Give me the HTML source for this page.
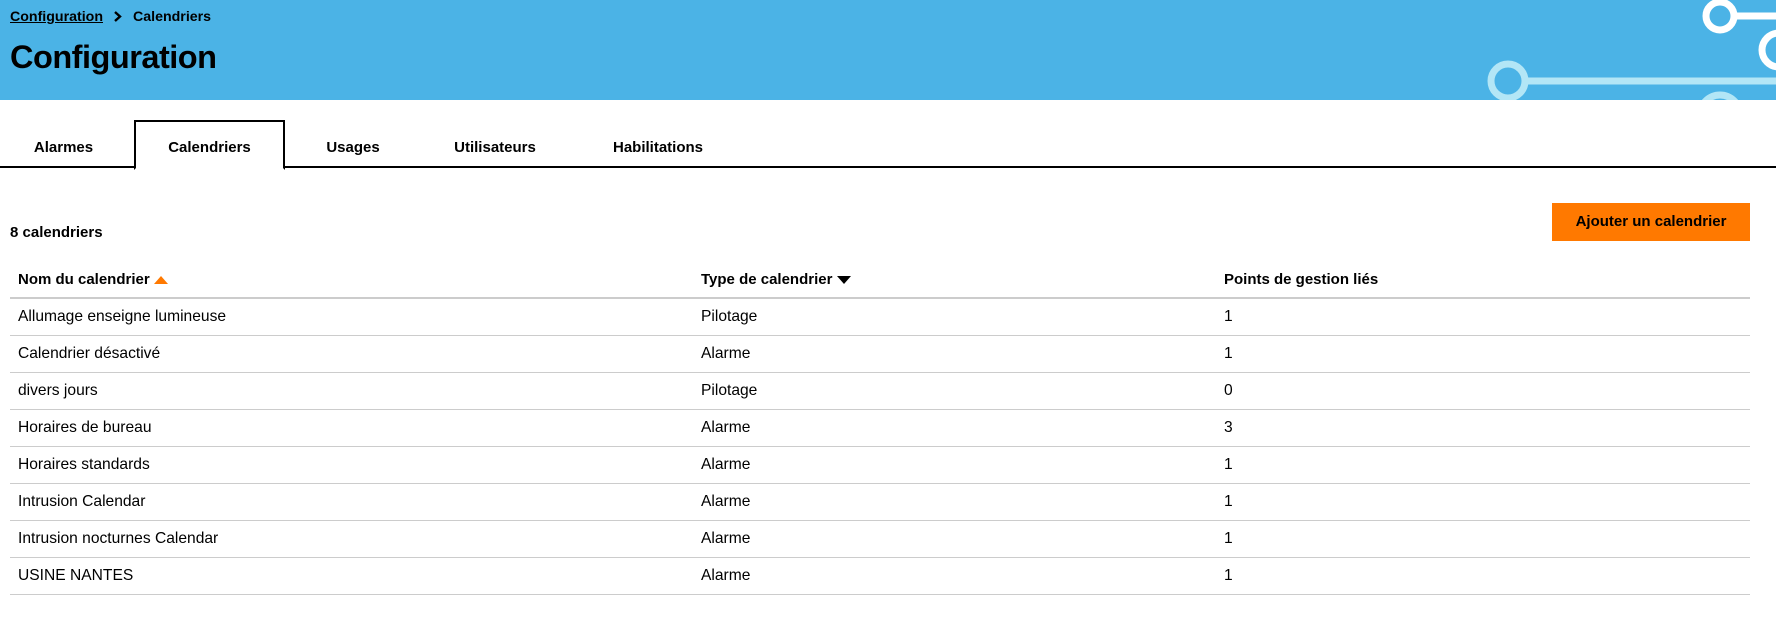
<!DOCTYPE html>
<html><head><meta charset="utf-8"><style>
*{margin:0;padding:0;box-sizing:border-box}
body{width:1776px;height:623px;background:#fff;font-family:"Liberation Sans",Arial,sans-serif;color:#000;position:relative;overflow:hidden}
.hdr{position:absolute;left:0;top:0;width:1776px;height:100px;background:#4bb3e6;overflow:hidden}
.bc{position:absolute;left:10px;top:9px;font-size:14.2px;font-weight:bold}
.bc u{text-decoration:underline}
.title{position:absolute;left:10px;top:39px;font-size:32.5px;font-weight:bold;letter-spacing:-0.5px}
.tabs{position:absolute;left:0;top:120px;width:1776px;height:48px;border-bottom:2px solid #000}
.tab{position:absolute;top:0;height:48px;line-height:55px;font-size:15px;font-weight:bold;text-align:center}
.tab.act{border:2px solid #000;border-bottom:2px solid #fff;height:50px;background:#fff;line-height:51px}
.cnt{position:absolute;left:10px;top:224px;font-size:15px;font-weight:bold}
.btn{position:absolute;left:1552px;top:203px;width:198px;height:38px;background:#ff7900;font-size:15px;font-weight:bold;text-align:center;line-height:38px}
table{position:absolute;left:10px;top:262px;width:1740px;border-collapse:collapse;font-size:15.6px}
th{text-align:left;font-weight:bold;height:36px;border-bottom:2px solid #ccc;padding-left:8px;font-size:15px}
td{height:37px;border-bottom:1px solid #ccc;padding-left:8px}
.c1{width:683px}.c2{width:523px}
</style></head><body>
<div class="hdr">
<svg width="1776" height="100" style="position:absolute;left:0;top:0">
<g fill="none" stroke-width="7">
<circle cx="1720" cy="16" r="14" stroke="#fff"/>
<line x1="1737" y1="16" x2="1776" y2="16" stroke="#fff"/>
<circle cx="1779" cy="50" r="17" stroke="#fff"/>
<circle cx="1508" cy="81" r="17" stroke="#b3e6f6"/>
<line x1="1528" y1="81" x2="1776" y2="81" stroke="#b3e6f6"/>
<circle cx="1720" cy="115" r="20" stroke="#b3e6f6"/>
</g></svg>
<div class="bc"><u>Configuration</u><svg width="30" height="12" style="vertical-align:-1px"><path d="M12 2L17 6.5L12 11" fill="none" stroke="#000" stroke-width="2.4"/></svg>Calendriers</div>
<div class="title">Configuration</div>
</div>
<div class="tabs">
<div class="tab" style="left:10px;width:107px">Alarmes</div>
<div class="tab act" style="left:134px;width:151px">Calendriers</div>
<div class="tab" style="left:303px;width:100px">Usages</div>
<div class="tab" style="left:430px;width:130px">Utilisateurs</div>
<div class="tab" style="left:590px;width:136px">Habilitations</div>
</div>
<div class="cnt">8 calendriers</div>
<div class="btn">Ajouter un calendrier</div>
<table>
<tr><th class="c1">Nom du calendrier <svg width="14" height="9" style="vertical-align:0"><path d="M0 9L7 1L14 9Z" fill="#ff7900"/></svg></th><th class="c2">Type de calendrier <svg width="14" height="9" style="vertical-align:0"><path d="M0 1L14 1L7 9Z" fill="#000"/></svg></th><th>Points de gestion liés</th></tr>
<tr><td>Allumage enseigne lumineuse</td><td>Pilotage</td><td>1</td></tr>
<tr><td>Calendrier désactivé</td><td>Alarme</td><td>1</td></tr>
<tr><td>divers jours</td><td>Pilotage</td><td>0</td></tr>
<tr><td>Horaires de bureau</td><td>Alarme</td><td>3</td></tr>
<tr><td>Horaires standards</td><td>Alarme</td><td>1</td></tr>
<tr><td>Intrusion Calendar</td><td>Alarme</td><td>1</td></tr>
<tr><td>Intrusion nocturnes Calendar</td><td>Alarme</td><td>1</td></tr>
<tr><td>USINE NANTES</td><td>Alarme</td><td>1</td></tr>
</table>
</body></html>
